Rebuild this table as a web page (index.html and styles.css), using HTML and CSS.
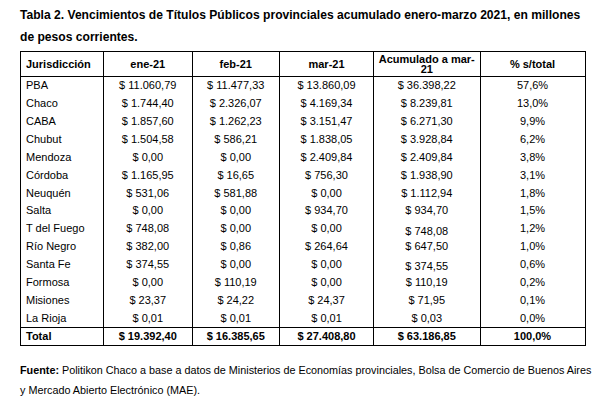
FILE: index.html
```html
<!DOCTYPE html>
<html lang="es">
<head>
<meta charset="utf-8">
<title>Tabla 2</title>
<link rel="stylesheet" href="styles.css">
</head>
<body>
<div class="page">
  <h1 class="title">Tabla 2. Vencimientos de Títulos Públicos provinciales acumulado enero-marzo 2021, en millones de pesos corrientes.</h1>
  <table class="data">
    <colgroup>
      <col class="c1"><col class="c2"><col class="c3"><col class="c4"><col class="c5"><col class="c6">
    </colgroup>
    <thead>
      <tr>
        <th class="left">Jurisdicción</th>
        <th>ene-21</th>
        <th>feb-21</th>
        <th>mar-21</th>
        <th class="two">Acumulado a mar-21</th>
        <th>% s/total</th>
      </tr>
    </thead>
    <tbody>
      <tr><td class="left">PBA</td><td>$ 11.060,79</td><td>$ 11.477,33</td><td>$ 13.860,09</td><td>$ 36.398,22</td><td>57,6%</td></tr>
      <tr><td class="left">Chaco</td><td>$ 1.744,40</td><td>$ 2.326,07</td><td>$ 4.169,34</td><td>$ 8.239,81</td><td>13,0%</td></tr>
      <tr><td class="left">CABA</td><td>$ 1.857,60</td><td>$ 1.262,23</td><td>$ 3.151,47</td><td>$ 6.271,30</td><td>9,9%</td></tr>
      <tr><td class="left">Chubut</td><td>$ 1.504,58</td><td>$ 586,21</td><td>$ 1.838,05</td><td>$ 3.928,84</td><td>6,2%</td></tr>
      <tr><td class="left">Mendoza</td><td>$ 0,00</td><td>$ 0,00</td><td>$ 2.409,84</td><td>$ 2.409,84</td><td>3,8%</td></tr>
      <tr><td class="left">Córdoba</td><td>$ 1.165,95</td><td>$ 16,65</td><td>$ 756,30</td><td>$ 1.938,90</td><td>3,1%</td></tr>
      <tr><td class="left">Neuquén</td><td>$ 531,06</td><td>$ 581,88</td><td>$ 0,00</td><td>$ 1.112,94</td><td>1,8%</td></tr>
      <tr><td class="left">Salta</td><td>$ 0,00</td><td>$ 0,00</td><td>$ 934,70</td><td>$ 934,70</td><td>1,5%</td></tr>
      <tr><td class="left">T del Fuego</td><td>$ 748,08</td><td>$ 0,00</td><td>$ 0,00</td><td class="low">$ 748,08</td><td>1,2%</td></tr>
      <tr><td class="left">Río Negro</td><td>$ 382,00</td><td>$ 0,86</td><td>$ 264,64</td><td>$ 647,50</td><td>1,0%</td></tr>
      <tr><td class="left">Santa Fe</td><td>$ 374,55</td><td>$ 0,00</td><td>$ 0,00</td><td class="low">$ 374,55</td><td>0,6%</td></tr>
      <tr><td class="left">Formosa</td><td>$ 0,00</td><td>$ 110,19</td><td>$ 0,00</td><td>$ 110,19</td><td>0,2%</td></tr>
      <tr><td class="left">Misiones</td><td>$ 23,37</td><td>$ 24,22</td><td>$ 24,37</td><td>$ 71,95</td><td>0,1%</td></tr>
      <tr><td class="left">La Rioja</td><td>$ 0,01</td><td>$ 0,01</td><td>$ 0,01</td><td>$ 0,03</td><td>0,0%</td></tr>
    </tbody>
    <tfoot>
      <tr><th class="left">Total</th><th>$ 19.392,40</th><th>$ 16.385,65</th><th>$ 27.408,80</th><th>$ 63.186,85</th><th>100,0%</th></tr>
    </tfoot>
  </table>
  <p class="source"><strong>Fuente:</strong> Politikon Chaco a base a datos de Ministerios de Economías provinciales, Bolsa de Comercio de Buenos Aires y Mercado Abierto Electrónico (MAE).</p>
</div>
</body>
</html>
```

FILE: styles.css
```css
html, body {
  margin: 0;
  padding: 0;
  background: #ffffff;
}

body {
  font-family: "Liberation Sans", Arial, sans-serif;
  color: #000000;
}

.page {
  padding: 5px 0 0 20px;
  width: 572px;
}

.title {
  margin: 0;
  font-size: 12.1px;
  font-weight: bold;
  line-height: 21.5px;
}

.data {
  margin-top: 3px;
  border-collapse: collapse;
  table-layout: fixed;
  width: 564px;
  font-size: 11px;
  border: 1px solid #000;
}

.c1 { width: 83px; }
.c2 { width: 88.5px; }
.c3 { width: 87.5px; }
.c4 { width: 94px; }
.c5 { width: 106.5px; }
.c6 { width: 105px; }

.data th,
.data td {
  border-left: 1px solid #000;
  border-right: 1px solid #000;
  text-align: center;
  padding: 0 5px;
  white-space: nowrap;
}

.data thead th {
  height: 24px;
  line-height: 10px;
  font-weight: bold;
  border-bottom: 1px solid #000;
  padding-top: 0;
  padding-bottom: 0;
}

.data thead th.two {
  white-space: normal;
  padding: 0 3px;
}

.data tbody td {
  height: 17.86px;
  line-height: 13px;
  padding-top: 0;
  padding-bottom: 0;
}

.data tbody td.low {
  vertical-align: bottom;
}

.data tfoot th {
  height: 17px;
  line-height: 13px;
  font-weight: bold;
  border-top: 1px solid #000;
  padding-top: 0;
  padding-bottom: 0;
}

.data .left {
  text-align: left;
}

.source {
  margin: 14px 0 0;
  font-size: 10.8px;
  line-height: 20px;
}

.source strong {
  font-weight: bold;
}
```
